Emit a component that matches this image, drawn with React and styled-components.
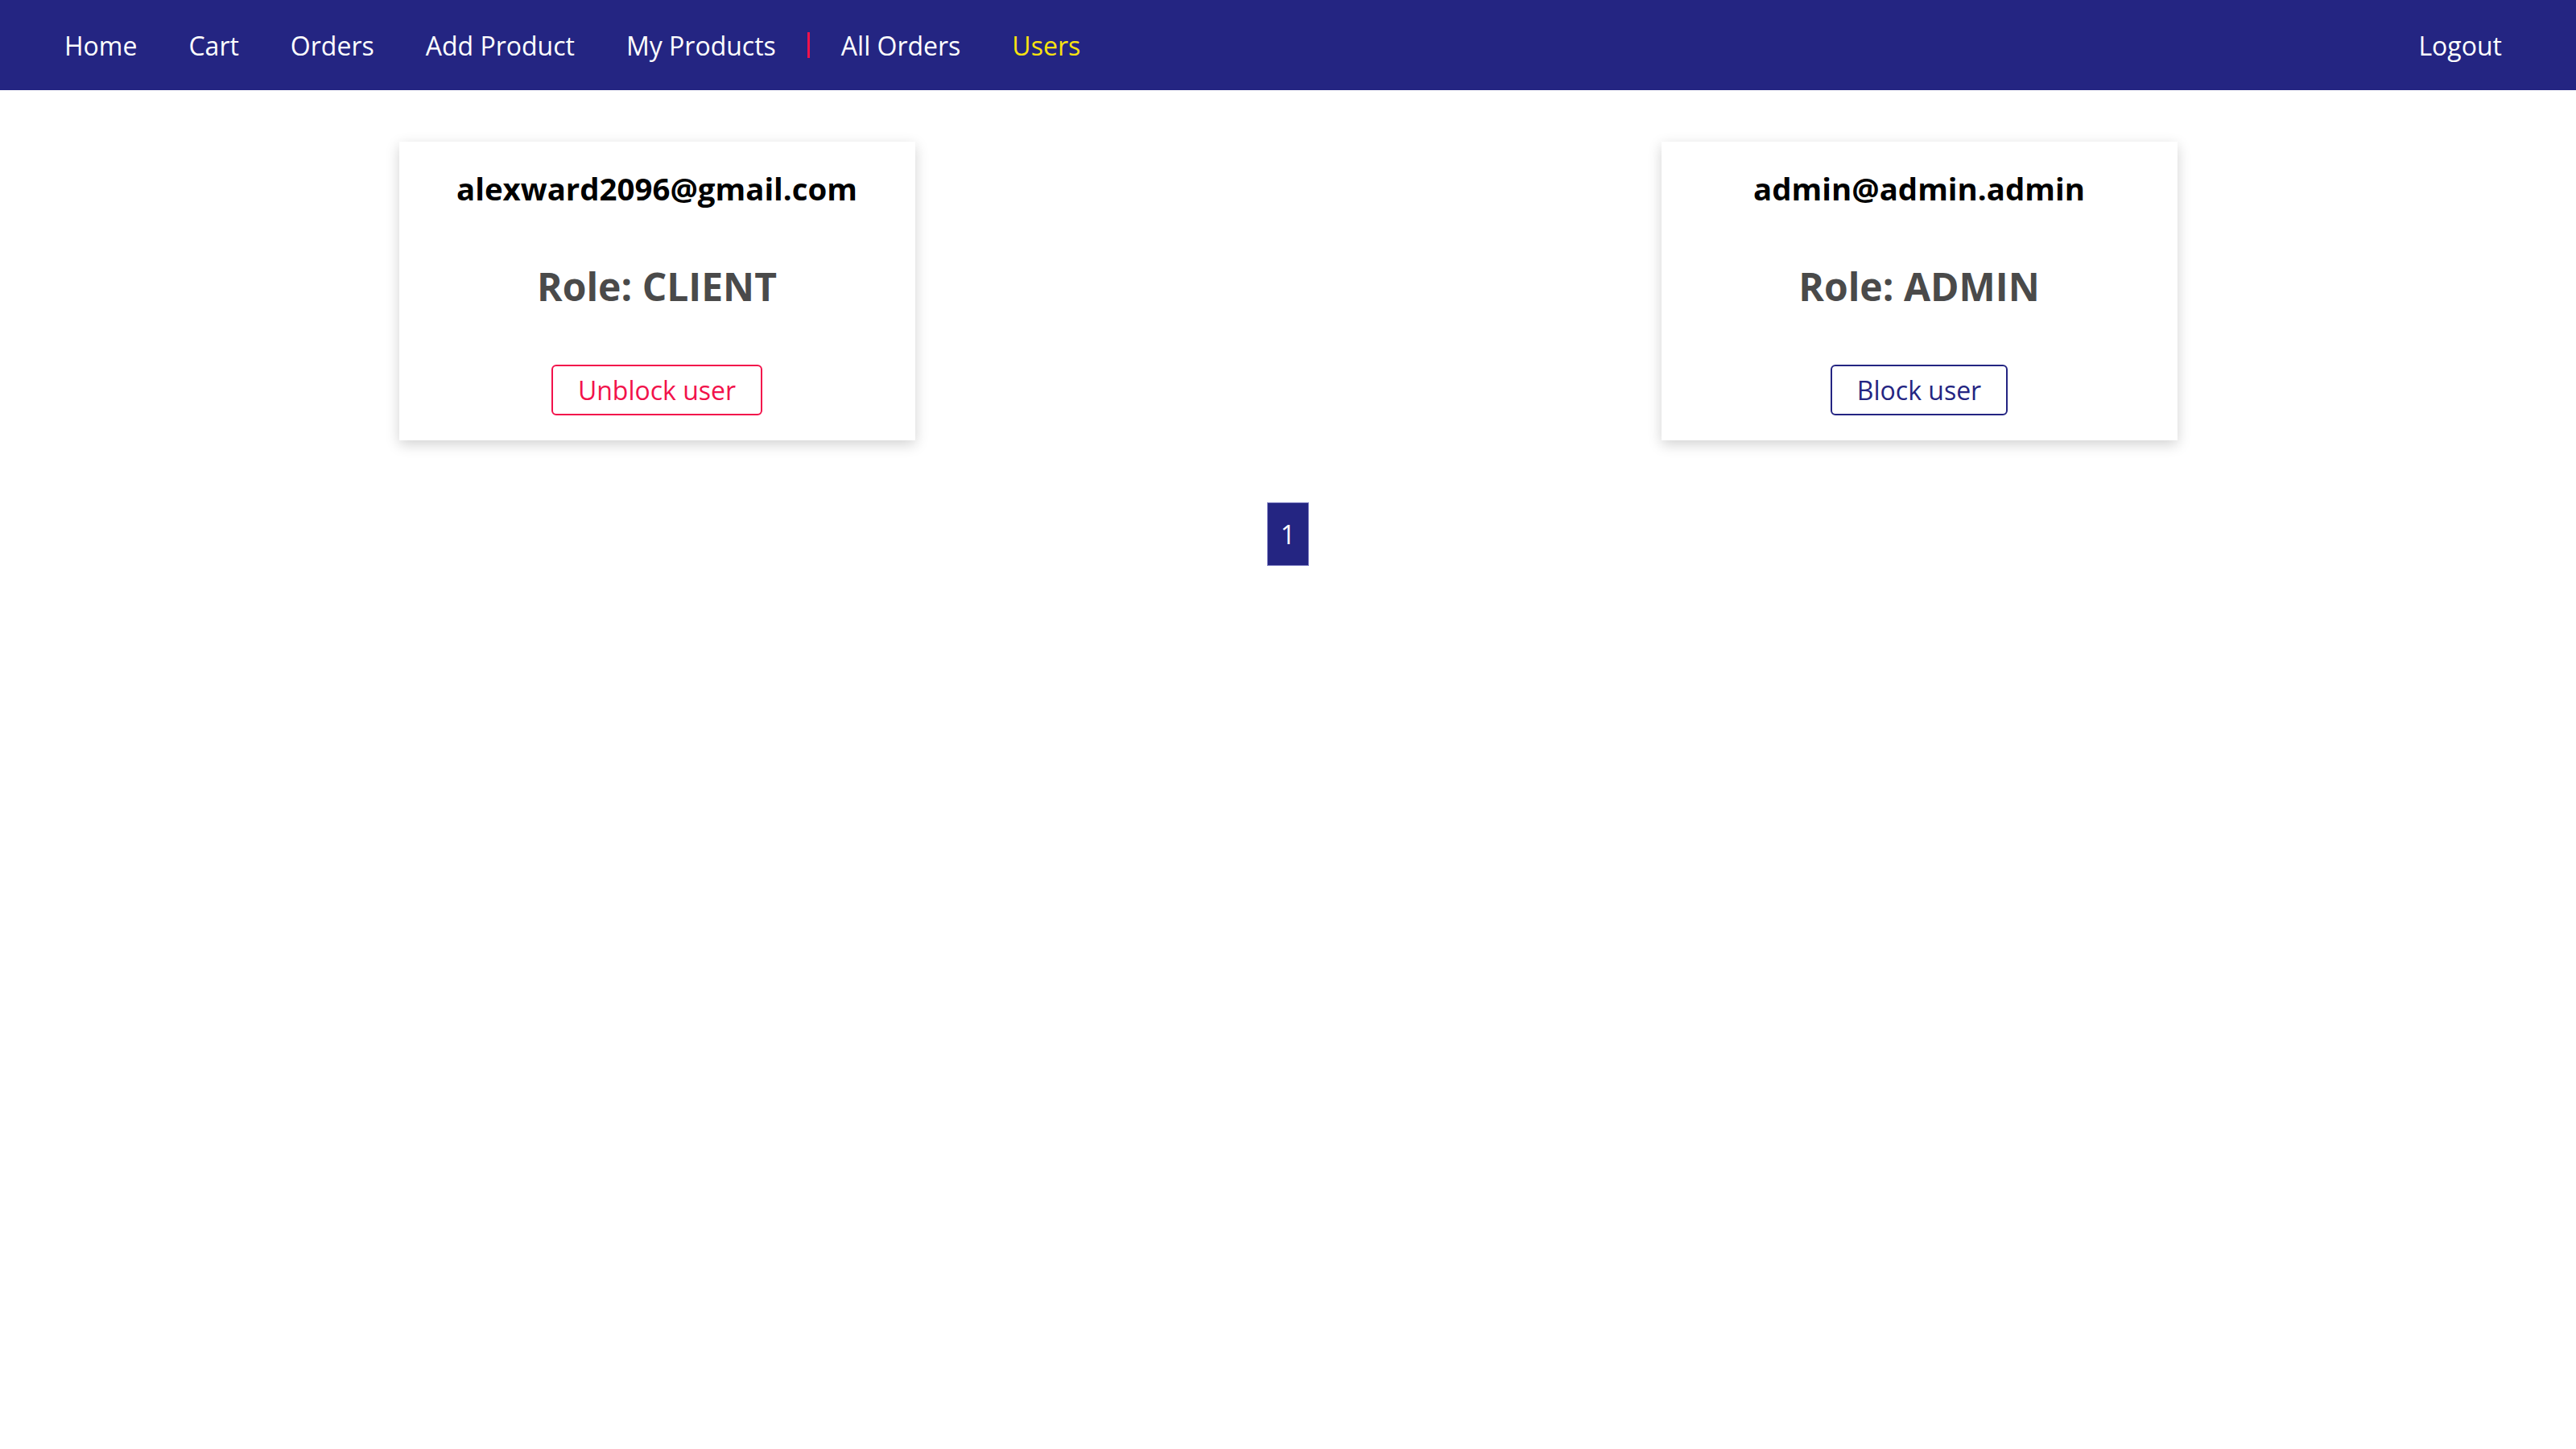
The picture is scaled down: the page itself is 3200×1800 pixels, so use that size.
import React from 'react';
import styled, { createGlobalStyle } from 'styled-components';

const NAVY = '#242582';
const CRIMSON = '#f2124b';

const users = [
    { email: 'alexward2096@gmail.com', role: 'CLIENT', blocked: true },
    { email: 'admin@admin.admin', role: 'ADMIN', blocked: false },
];

const links = ['Home', 'Cart', 'Orders', 'Add Product', 'My Products'];
const adminLinks = ['All Orders', 'Users'];

/**
 * Page showing every user with a button to block or unblock them.
 */
const App = () => (
    <>
        <GlobalStyle />
        <Nav>
            <NavList>
                {links.map(link => (
                    <NavItem key={link}>{link}</NavItem>
                ))}
                <Separator />
                {adminLinks.map(link => (
                    <NavItem key={link} $active={link === 'Users'}>
                        {link}
                    </NavItem>
                ))}
            </NavList>
            <LogoutItem>Logout</LogoutItem>
        </Nav>
        <UserGrid>
            {users.map(user => (
                <UserCard key={user.email}>
                    <Email>{user.email}</Email>
                    <Role>Role: {user.role}</Role>
                    <ActionButton $blocked={user.blocked}>{user.blocked ? 'Unblock user' : 'Block user'}</ActionButton>
                </UserCard>
            ))}
        </UserGrid>
        <Pagination>
            <PageButton>1</PageButton>
        </Pagination>
    </>
);

const GlobalStyle = createGlobalStyle`
    body {
        margin: 0;
        background: #fff;
        font-family: 'Open Sans', 'Noto Sans', sans-serif;
    }
`;

/**
 * The 112px navigation bar.
 */
const Nav = styled.nav`
    display: flex;
    align-items: center;
    justify-content: space-between;
    height: 112px;
    padding: 0 60px 0 48px;
    background: ${NAVY};
`;

const NavList = styled.div`
    display: flex;
    align-items: center;
`;

const NavItem = styled.a`
    padding: 0 32px;
    font-size: 32px;
    color: ${props => (props.$active ? '#f9e20f' : '#fff')};
    cursor: pointer;
`;

const LogoutItem = styled(NavItem)`
    padding-right: 32px;
`;

/**
 * Red bar between the client and the admin links.
 */
const Separator = styled.span`
    width: 3px;
    height: 32px;
    margin: 0 7px;
    background: ${CRIMSON};
`;

const UserGrid = styled.div`
    display: grid;
    grid-template-columns: 1fr 1fr;
    padding: 64px 32px 0;
`;

const UserCard = styled.div`
    justify-self: center;
    display: flex;
    flex-direction: column;
    align-items: center;
    width: 641px;
    padding: 32px 0 31px;
    box-sizing: border-box;
    background: #fff;
    box-shadow: 0 5px 16px rgba(0, 0, 0, 0.18);
`;

const Email = styled.div`
    font-size: 38.4px;
    font-weight: 700;
    color: #000;
`;

const Role = styled.h3`
    margin: 63px 0 65px;
    font-size: 48px;
    font-weight: 700;
    color: #4a4a4a;
`;

const ActionButton = styled.button`
    padding: 8px 31px;
    border: 2px solid ${props => (props.$blocked ? CRIMSON : NAVY)};
    border-radius: 6px;
    background: #fff;
    font-family: inherit;
    font-size: 32px;
    color: ${props => (props.$blocked ? CRIMSON : NAVY)};
    cursor: pointer;
`;

const Pagination = styled.div`
    display: flex;
    justify-content: center;
    margin-top: 77px;
`;

const PageButton = styled.div`
    padding: 17px 16px;
    border: 1px solid #8585c6;
    background: ${NAVY};
    font-size: 32px;
    color: #fff;
`;

export default App;
